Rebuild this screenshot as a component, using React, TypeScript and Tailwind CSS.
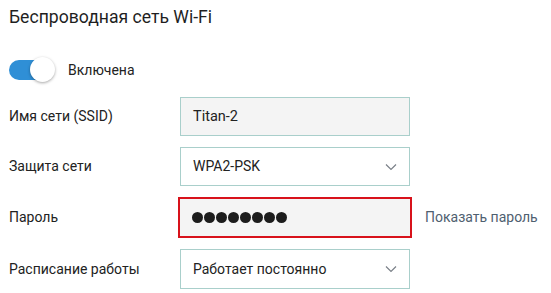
import React from "react";

function Chevron() {
  return (
    <svg width="12" height="7" viewBox="0 0 12 7" className="absolute right-[12px] top-1/2 -translate-y-1/2">
      <path d="M1 1 L6 6 L11 1" fill="none" stroke="#7a8088" strokeWidth="1.2" />
    </svg>
  );
}

export default function App() {
  const dots = [0, 1, 2, 3, 4, 5, 6, 7];
  return (
    <div className="w-[551px] h-[293px] bg-white text-[#222] overflow-hidden" style={{ fontFamily: "Roboto, sans-serif" }}>
      <div className="pl-[9px] pt-[5px]">
        <div className="text-[17.6px] leading-[24px] text-[#1f1f1f]">Беспроводная сеть Wi-Fi</div>
        <div className="flex items-center mt-[28px] h-[26px]">
          <div className="relative w-[46px] h-[26px]">
            <div className="absolute left-0 top-[3px] w-[44px] h-[20px] rounded-full bg-[#2f8fd6]" />
            <div className="absolute left-[21px] top-0 w-[25px] h-[25px] rounded-full bg-white shadow-[0_1px_3px_rgba(0,0,0,0.35)]" />
          </div>
          <span className="ml-[13px] text-[14px]">Включена</span>
        </div>
        <div className="mt-[14px] flex flex-col gap-[11px]">
          <div className="flex items-center">
            <div className="w-[171px] text-[14px]">Имя сети (SSID)</div>
            <div className="w-[230px] h-[39px] border border-[#a9cfcb] bg-[#f4f4f4] flex items-center pl-[12px] text-[14.5px]">Titan-2</div>
          </div>
          <div className="flex items-center">
            <div className="w-[171px] text-[14px]">Защита сети</div>
            <div className="relative w-[230px] h-[39px] border border-[#a9cfcb] bg-white flex items-center pl-[12px] text-[14px]">
              WPA2-PSK
              <Chevron />
            </div>
          </div>
          <div className="flex items-center">
            <div className="w-[169px] text-[14px]">Пароль</div>
            <div className="w-[234px] h-[41px] border-2 border-[#d8121b] bg-[#f4f4f4] flex items-center pl-[12px] gap-[1px]">
              {dots.map((d) => (
                <span key={d} className="w-[11px] h-[11px] rounded-full bg-[#1c1c1c]" />
              ))}
            </div>
            <span className="ml-[13px] text-[14px] text-[#4f6070]">Показать пароль</span>
          </div>
          <div className="flex items-center">
            <div className="w-[171px] text-[14px]">Расписание работы</div>
            <div className="relative w-[230px] h-[40px] border border-[#a9cfcb] bg-white flex items-center pl-[12px] text-[14px]">
              Работает постоянно
              <Chevron />
            </div>
          </div>
        </div>
      </div>
    </div>
  );
}
